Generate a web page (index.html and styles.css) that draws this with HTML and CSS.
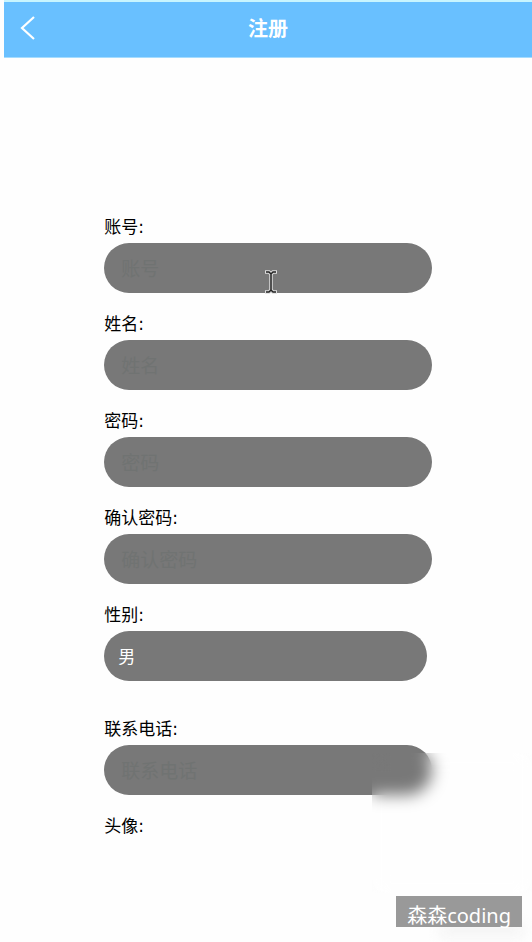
FILE: index.html
```html
<!DOCTYPE html>
<html lang="zh-CN">
<head>
<meta charset="utf-8">
<meta name="viewport" content="width=device-width, initial-scale=1">
<title>注册</title>
<link rel="stylesheet" href="styles.css">
</head>
<body>
<div class="page">
  <header class="topbar">
    <button class="back" type="button" aria-label="返回">
      <svg width="16" height="24" viewBox="0 0 16 24" fill="none" stroke="#fff" stroke-width="2.200"><path d="M14 1 2 12 14 23"/></svg>
    </button>
    <h1 class="title">注册</h1>
  </header>
  <form class="form">
    <div class="field">
      <label for="account">账号:</label>
      <input id="account" type="text" placeholder="账号">
    </div>
    <div class="field">
      <label for="name">姓名:</label>
      <input id="name" type="text" placeholder="姓名">
    </div>
    <div class="field">
      <label for="password">密码:</label>
      <input id="password" type="password" placeholder="密码">
    </div>
    <div class="field">
      <label for="confirm">确认密码:</label>
      <input id="confirm" type="password" placeholder="确认密码">
    </div>
    <div class="field field-select">
      <label for="gender">性别:</label>
      <select id="gender"><option>男</option><option>女</option></select>
    </div>
    <div class="field">
      <label for="phone">联系电话:</label>
      <input id="phone" type="tel" placeholder="联系电话">
    </div>
    <div class="field">
      <span class="caption">头像:</span>
    </div>
  </form>
  <div class="frost"></div>
  <div class="shade"></div>
  <div class="watermark">森森coding</div>
  <svg class="cursor" width="14" height="24" viewBox="0 0 14 24" fill="none">
    <path d="M1 2h4l2 2 2-2h4M7 4v16M1 22h4l2-2 2 2h4" stroke="#ddd" stroke-width="3.500"/>
    <path d="M2 2h3l2 2 2-2h3M7 4v16M2 22h3l2-2 2 2h3" stroke="#222" stroke-width="1.500"/>
  </svg>
</div>
</body>
</html>
```
FILE: styles.css
```css
* {
  box-sizing: border-box;
}

body {
  margin: 0;
  background: #fefefe;
  color: #000;
  font-family: "DejaVu Sans", "Noto Sans CJK SC", sans-serif;
  font-size: 17px;
}

.page {
  position: relative;
  min-height: 100vh;
  overflow: hidden;
  padding-left: 4px;
}

.topbar {
  display: grid;
  grid-template-columns: 48px 1fr 48px;
  align-items: center;
  height: 58px;
  padding-bottom: 3px;
  border-top: 2px solid #c8f5ff;
  border-bottom: 1px solid #a5dcff;
  background: #69c0ff;
}

.back {
  display: flex;
  justify-content: center;
  padding: 0;
  border: 0;
  background: none;
}

.title {
  margin: 0;
  color: #fff;
  font-family: "Noto Sans CJK SC", sans-serif;
  font-size: 20px;
  font-weight: 700;
  line-height: 28px;
  text-align: center;
}

.form {
  display: flex;
  flex-direction: column;
  gap: 18px;
  width: 62%;
  margin: 156px auto 0;
}

.field {
  display: flex;
  flex-direction: column;
}

.field label,
.caption {
  height: 29px;
  line-height: 26px;
}

.field input,
.field select {
  width: 100%;
  height: 50px;
  padding: 0 17px 2px;
  border: 0;
  border-radius: 25px;
  background: #787878;
  color: #fff;
  font-family: "Noto Sans CJK SC", sans-serif;
  font-size: 19px;
}

.field input::placeholder {
  color: #707372;
  opacity: 1;
}

.field select {
  width: calc(100% - 5px);
  padding: 0 14px 2px;
  appearance: none;
  font-size: 17px;
}

.field-select {
  margin-bottom: 17px;
}

.frost {
  position: absolute;
  top: 753px;
  right: 0;
  width: 160px;
  height: 140px;
  backdrop-filter: blur(8px);
}

.shade {
  position: absolute;
  right: 8px;
  bottom: 4px;
  width: 84px;
  height: 16px;
  background: #f5f5f5;
  filter: blur(6px);
}

.watermark {
  position: absolute;
  right: 10px;
  bottom: 15px;
  height: 31px;
  padding: 0 11px;
  background: #999;
  color: #fff;
  font-family: "Noto Sans", "Noto Sans CJK SC", sans-serif;
  font-size: 20px;
  line-height: 40px;
}

.cursor {
  position: absolute;
  top: 270px;
  left: 264px;
}
```
